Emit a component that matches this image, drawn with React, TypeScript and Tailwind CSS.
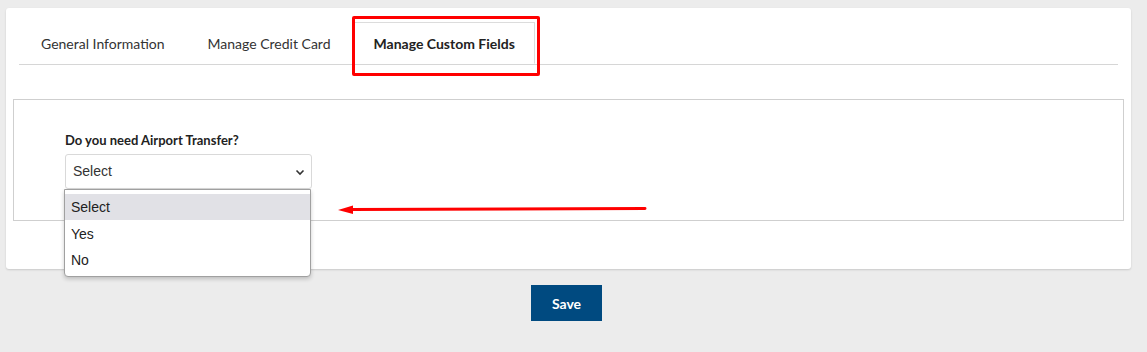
import React from "react";

export default function App() {
  const tabs = ["General Information", "Manage Credit Card", "Manage Custom Fields"];
  return (
    <div className="relative min-h-[352px] w-[1147px] bg-[#ececec] pt-[8px] font-['Lato','Liberation_Sans',sans-serif]">
      <div className="ml-[6px] w-[1125px] rounded-[3px] bg-white pt-[14px] pb-[48px] shadow-[0_1px_2px_rgba(0,0,0,0.15)]">
        <div className="mx-[13px] flex border-b border-[#d6d6d6] pl-[2px]">
          {tabs.map((t, i) => (
            <div
              key={t}
              className={
                i === 2
                  ? "-mb-px mr-[3px] flex h-[42px] items-center border border-b-white border-[#dcdcdc] bg-white px-[19px] text-[14px] font-bold text-[#222]"
                  : "mr-[3px] flex h-[42px] items-center border border-transparent px-[19px] text-[14px] text-[#333]"
              }
            >
              {t}
            </div>
          ))}
        </div>
        <div className="mx-[7px] mt-[34px] border border-[#cfcfcf] pl-[51px] pt-[31px] pb-[31px]">
          <div className="text-[13px] font-bold leading-[18px] text-[#222]">Do you need Airport Transfer?</div>
          <div className="mt-[5px] flex h-[35px] w-[247px] items-center justify-between rounded-[3px] border border-[#d9d9d9] pl-[7px] pr-[6px] font-['Liberation_Sans',Arial,sans-serif] text-[14px] text-[#333]">
            <span>Select</span>
            <svg width="10" height="8" viewBox="0 0 10 8" fill="none">
              <path d="M1.5 2.5 L5 6 L8.5 2.5" stroke="#333" strokeWidth="1.6" />
            </svg>
          </div>
        </div>
      </div>
      <div className="ml-[6px] flex w-[1125px] justify-center pr-[4px] pt-[16px]">
        <button className="h-[36px] w-[71px] bg-[#004a80] text-[14px] font-bold text-white">Save</button>
      </div>

      {/* Active tab highlight box */}
      <div className="pointer-events-none absolute left-[352px] top-[16px] h-[60px] w-[188px] rounded-[2px] border-[3px] border-[#f00]" />

      {/* Open dropdown list */}
      <div className="absolute left-[64px] top-[189px] w-[247px] rounded-b-[4px] border border-[#a0a0a0] bg-white pt-[4px] pb-[3px] font-['Liberation_Sans',Arial,sans-serif] text-[14px] text-[#222] shadow-[0_2px_4px_rgba(0,0,0,0.2)]">
        <div className="flex h-[26px] items-center bg-[#e1e1e6] pl-[6px]">Select</div>
        <div className="flex h-[27px] items-center pl-[6px] pt-[1px]">Yes</div>
        <div className="flex h-[26px] items-center pl-[6px]">No</div>
      </div>

      {/* Red arrow */}
      <svg className="absolute left-[336px] top-[202px]" width="314" height="16" viewBox="0 0 314 16">
        <path d="M309 6.5 L14 7.5" stroke="#f00" strokeWidth="3" strokeLinecap="round" />
        <path d="M2 8 L17 3.5 L17 12 Z" fill="#f00" />
      </svg>
    </div>
  );
}
